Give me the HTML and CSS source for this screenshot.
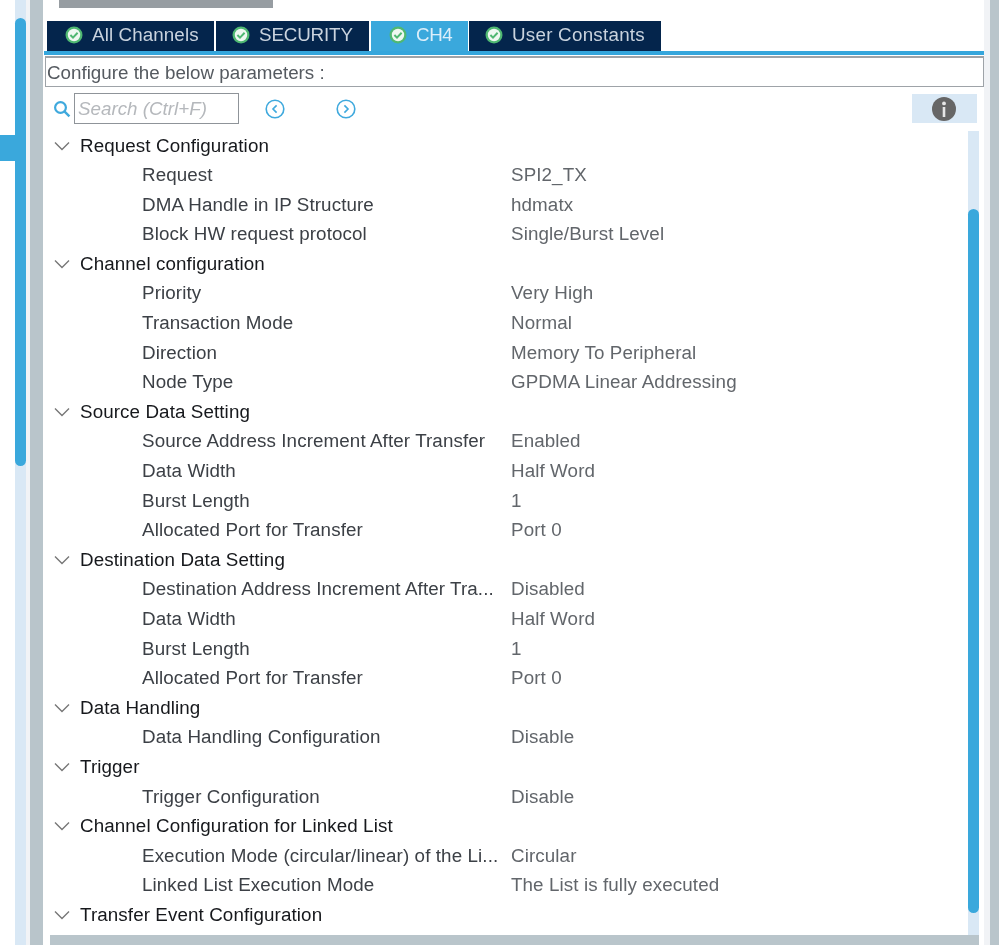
FILE: index.html
```html
<!DOCTYPE html>
<html lang="en">
<head>
<meta charset="utf-8">
<title>DMA channel configuration</title>
<link rel="stylesheet" href="styles.css">
</head>
<body>
<div class="page">
  <aside class="rail">
    <div class="rail-tabs"><div class="rail-tab"></div></div>
    <div class="rail-track"><div class="rail-thumb"></div></div>
    <div class="rail-gap"></div>
    <div class="rail-wall"></div>
  </aside>
  <main class="panel">
    <div class="top-strip"><div class="top-button"></div></div>
    <nav class="tabs">
      <div class="tab"><svg class="check" viewBox="0 0 18 18"><circle cx="9" cy="9" r="8.5" fill="#4fb872"/><circle cx="9" cy="9" r="6.2" fill="#eef8f1"/><path d="M5.4 9l2.6 2.6 4.6-4.8" fill="none" stroke="#4fb872" stroke-width="2"/></svg><span>All Channels</span></div>
      <div class="tab tab-security"><svg class="check" viewBox="0 0 18 18"><circle cx="9" cy="9" r="8.5" fill="#4fb872"/><circle cx="9" cy="9" r="6.2" fill="#eef8f1"/><path d="M5.4 9l2.6 2.6 4.6-4.8" fill="none" stroke="#4fb872" stroke-width="2"/></svg><span>SECURITY</span></div>
      <div class="tab tab-active"><svg class="check" viewBox="0 0 18 18"><circle cx="9" cy="9" r="8.5" fill="#4fb872"/><circle cx="9" cy="9" r="6.2" fill="#eef8f1"/><path d="M5.4 9l2.6 2.6 4.6-4.8" fill="none" stroke="#4fb872" stroke-width="2"/></svg><span>CH4</span></div>
      <div class="tab tab-user"><svg class="check" viewBox="0 0 18 18"><circle cx="9" cy="9" r="8.5" fill="#4fb872"/><circle cx="9" cy="9" r="6.2" fill="#eef8f1"/><path d="M5.4 9l2.6 2.6 4.6-4.8" fill="none" stroke="#4fb872" stroke-width="2"/></svg><span>User Constants</span></div>
    </nav>
    <div class="tab-rule"></div>
    <div class="caption">Configure the below parameters :</div>
    <div class="search-row">
      <svg class="search-icon" viewBox="0 0 18 18"><circle cx="7.5" cy="7.5" r="5.4" fill="none" stroke="#3fa9dd" stroke-width="2.2"/><path d="M11.4 11.4l5 5" stroke="#3fa9dd" stroke-width="2.4"/></svg>
      <div class="search-box">Search (Ctrl+F)</div>
      <svg class="nav-icon nav-prev" viewBox="0 0 20 20"><circle cx="10" cy="10" r="8.8" fill="none" stroke="#3fa9dd" stroke-width="1.6"/><path d="M11.6 6.4L8 10l3.6 3.6" fill="none" stroke="#3fa9dd" stroke-width="1.6"/></svg>
      <svg class="nav-icon nav-next" viewBox="0 0 20 20"><circle cx="10" cy="10" r="8.8" fill="none" stroke="#3fa9dd" stroke-width="1.6"/><path d="M8.4 6.4L12 10l-3.6 3.6" fill="none" stroke="#3fa9dd" stroke-width="1.6"/></svg>
      <div class="info-box"><svg class="info-icon" viewBox="0 0 24 24"><circle cx="12" cy="12" r="12" fill="#666"/><circle cx="12" cy="6.4" r="1.9" fill="#e6e6e6"/><rect x="10.7" y="10" width="2.6" height="10" fill="#e6e6e6"/></svg></div>
    </div>
    <div class="body-row">
      <div class="tree">
        <div class="group"><svg class="chev" viewBox="0 0 16 10"><path d="M1 1.5l7 7 7-7" fill="none" stroke="#777" stroke-width="1.4"/></svg>Request Configuration</div>
        <div class="item"><span class="name">Request</span><span class="value">SPI2_TX</span></div>
        <div class="item"><span class="name">DMA Handle in IP Structure</span><span class="value">hdmatx</span></div>
        <div class="item"><span class="name">Block HW request protocol</span><span class="value">Single/Burst Level</span></div>
        <div class="group"><svg class="chev" viewBox="0 0 16 10"><path d="M1 1.5l7 7 7-7" fill="none" stroke="#777" stroke-width="1.4"/></svg>Channel configuration</div>
        <div class="item"><span class="name">Priority</span><span class="value">Very High</span></div>
        <div class="item"><span class="name">Transaction Mode</span><span class="value">Normal</span></div>
        <div class="item"><span class="name">Direction</span><span class="value">Memory To Peripheral</span></div>
        <div class="item"><span class="name">Node Type</span><span class="value">GPDMA Linear Addressing</span></div>
        <div class="group"><svg class="chev" viewBox="0 0 16 10"><path d="M1 1.5l7 7 7-7" fill="none" stroke="#777" stroke-width="1.4"/></svg>Source Data Setting</div>
        <div class="item"><span class="name">Source Address Increment After Transfer</span><span class="value">Enabled</span></div>
        <div class="item"><span class="name">Data Width</span><span class="value">Half Word</span></div>
        <div class="item"><span class="name">Burst Length</span><span class="value">1</span></div>
        <div class="item"><span class="name">Allocated Port for Transfer</span><span class="value">Port 0</span></div>
        <div class="group"><svg class="chev" viewBox="0 0 16 10"><path d="M1 1.5l7 7 7-7" fill="none" stroke="#777" stroke-width="1.4"/></svg>Destination Data Setting</div>
        <div class="item"><span class="name">Destination Address Increment After Tra...</span><span class="value">Disabled</span></div>
        <div class="item"><span class="name">Data Width</span><span class="value">Half Word</span></div>
        <div class="item"><span class="name">Burst Length</span><span class="value">1</span></div>
        <div class="item"><span class="name">Allocated Port for Transfer</span><span class="value">Port 0</span></div>
        <div class="group"><svg class="chev" viewBox="0 0 16 10"><path d="M1 1.5l7 7 7-7" fill="none" stroke="#777" stroke-width="1.4"/></svg>Data Handling</div>
        <div class="item"><span class="name">Data Handling Configuration</span><span class="value">Disable</span></div>
        <div class="group"><svg class="chev" viewBox="0 0 16 10"><path d="M1 1.5l7 7 7-7" fill="none" stroke="#777" stroke-width="1.4"/></svg>Trigger</div>
        <div class="item"><span class="name">Trigger Configuration</span><span class="value">Disable</span></div>
        <div class="group"><svg class="chev" viewBox="0 0 16 10"><path d="M1 1.5l7 7 7-7" fill="none" stroke="#777" stroke-width="1.4"/></svg>Channel Configuration for Linked List</div>
        <div class="item"><span class="name">Execution Mode (circular/linear) of the Li...</span><span class="value">Circular</span></div>
        <div class="item"><span class="name">Linked List Execution Mode</span><span class="value">The List is fully executed</span></div>
        <div class="group"><svg class="chev" viewBox="0 0 16 10"><path d="M1 1.5l7 7 7-7" fill="none" stroke="#777" stroke-width="1.4"/></svg>Transfer Event Configuration</div>
      </div>
      <div class="tree-track"><div class="tree-thumb"></div></div>
    </div>
    <div class="bottom-bar"></div>
  </main>
  <div class="right-edge">
    <div class="edge-light"></div>
    <div class="edge-wall"></div>
  </div>
</div>
</body>
</html>
```
FILE: styles.css
```css
* { box-sizing: border-box; }
html, body { margin: 0; height: 100%; background: #fff; overflow: hidden; }
body { font-family: "Liberation Sans", Arial, sans-serif; font-size: 18.8px; }

.page { display: flex; width: 999px; height: 945px; filter: blur(0.35px); }

.rail { display: flex; width: 44px; flex: none; }
.rail-tabs { width: 15px; padding-top: 135px; }
.rail-tab { height: 26px; background: #3aa8dc; }
.rail-track { width: 11px; padding-top: 18px; background: #d9e8f5; }
.rail-thumb { height: 448px; background: #3aa8dc; border-radius: 6px; }
.rail-gap { width: 4px; background: #f1f3f6; }
.rail-wall { width: 13px; background: #b9c5cb; }

.panel { display: flex; flex-direction: column; width: 940px; flex: none; height: 945px; }
.top-strip { height: 21px; flex: none; padding-left: 15px; }
.top-button { width: 214px; height: 8px; background: #979da2; }

.tabs { display: flex; height: 30px; flex: none; padding-left: 3px; gap: 2px; }
.tab { display: flex; align-items: center; gap: 9px; padding-left: 18px; padding-bottom: 2px; width: 167px; background: #04254c; color: #c9d3de; letter-spacing: 0.1px; }
.tab-security { width: 153px; padding-left: 16px; letter-spacing: -0.15px; }
.tab-active { width: 97px; background: #3aa8dc; color: #dbeefa; letter-spacing: -0.4px; }
.tab-user { width: 192px; margin-left: -1px; padding-left: 16px; letter-spacing: 0.25px; }
.check { width: 18px; height: 18px; flex: none; }

.tab-rule { height: 4px; flex: none; background: #35a6dc; }
.caption { height: 31px; flex: none; margin: 1px 0 0 1px; padding-left: 1px; border: 1px solid #9ea3a8; border-top-width: 2px; line-height: 30px; color: #555a60; white-space: nowrap; }

.search-row { display: flex; align-items: center; height: 31px; margin-top: 6px; flex: none; padding-left: 9px; }
.search-icon { width: 18px; height: 18px; flex: none; }
.search-box { width: 165px; height: 31px; margin-left: 3px; padding-left: 3px; border: 1px solid #8f9499; line-height: 29px; font-style: italic; color: #b5b8bc; white-space: nowrap; }
.nav-icon { width: 20px; height: 20px; flex: none; }
.nav-prev { margin-left: 26px; }
.nav-next { margin-left: 51px; }
.info-box { display: flex; align-items: center; justify-content: center; width: 65px; height: 29px; margin-left: 556px; padding-right: 2px; flex: none; background: #d9e8f5; }
.info-icon { width: 24px; height: 24px; }

.body-row { display: flex; flex: 1; min-height: 0; padding-top: 7px; }
.tree { flex: 1; min-width: 0; margin-top: -0.3px; letter-spacing: 0.1px; }
.group { display: flex; align-items: center; height: 29.6px; padding-left: 10px; color: #16181c; white-space: nowrap; }
.chev { width: 16px; height: 10px; margin-right: 10px; flex: none; }
.item { display: flex; align-items: center; height: 29.6px; padding-left: 98px; color: #3c4046; white-space: nowrap; }
.name { width: 369px; flex: none; }
.value { color: #62666b; }
.tree-track { width: 11px; flex: none; margin-right: 5px; padding-top: 78px; background: #d9e8f5; }
.tree-thumb { height: 704px; background: #3aa8dc; border-radius: 6px; }
.bottom-bar { height: 10px; flex: none; margin: 0 5px 0 6px; background: #b9c5cb; }

.right-edge { display: flex; width: 15px; flex: none; }
.edge-light { width: 6px; background: #f1f3f6; }
.edge-wall { width: 9px; background: #b9c5cb; }
```
